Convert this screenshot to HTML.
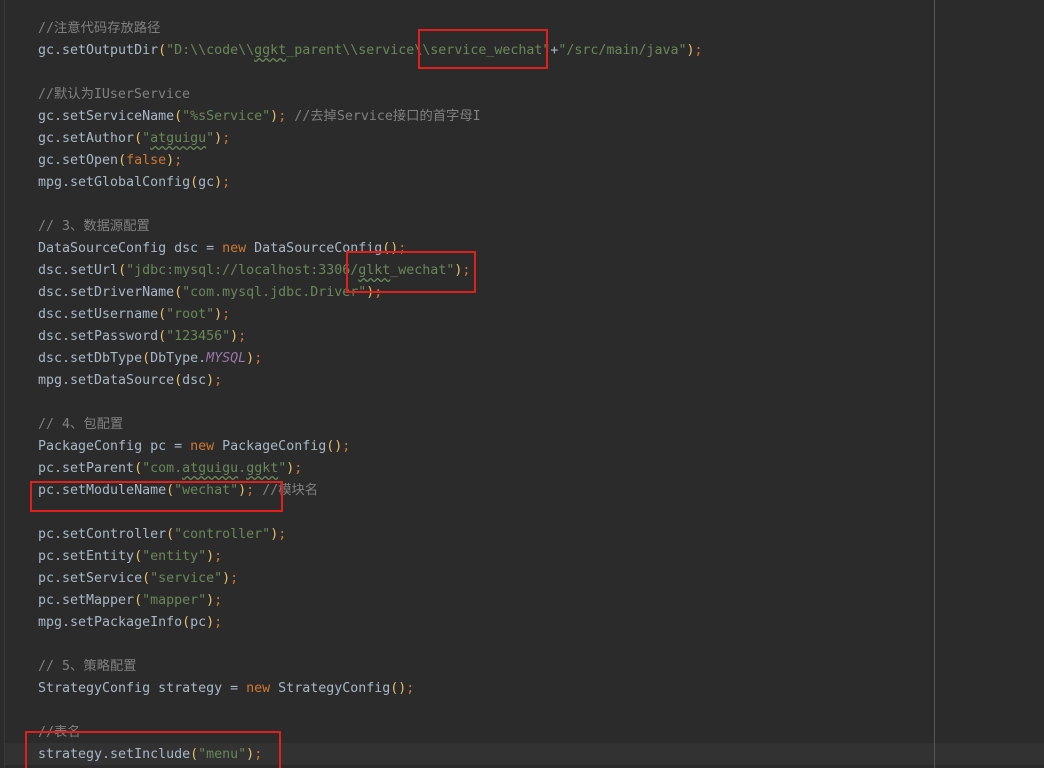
<!DOCTYPE html>
<html><head><meta charset="utf-8"><style>
html,body{margin:0;padding:0;background:#2b2b2b;width:1044px;height:768px;overflow:hidden;position:relative}
.gut{position:absolute;left:4px;top:0;width:1px;height:768px;background:#353d35}
.mg{position:absolute;left:934px;top:0;width:1px;height:768px;background:#555}
.cur{position:absolute;left:5px;top:743px;width:1039px;height:22px;background:#323232}
pre{position:absolute;left:38px;top:18px;margin:0;font-family:"DejaVu Sans Mono","Noto Sans CJK SC",monospace;font-size:13.3px;line-height:22px;color:#a9b7c6}
.c{color:#808080}.s{color:#6a8759}.k{color:#cc7832}.p{color:#e8bf6a}.m{color:#9876aa;font-style:italic}
.u{text-decoration:underline wavy #6a8759;text-underline-offset:3px}
.box{position:absolute;border:2px solid #e0201f;box-sizing:border-box}
</style></head><body>
<div class="gut"></div><div class="cur"></div><div class="mg"></div>
<pre><span class="c">//注意代码存放路径</span>
gc.setOutputDir<span class="p">(</span><span class="s">"D:\\code\\<span class="u">ggkt</span>_parent\\service\\service_wechat"</span>+<span class="s">"/src/main/java"</span><span class="p">)</span><span class="k">;</span>

<span class="c">//默认为IUserService</span>
gc.setServiceName<span class="p">(</span><span class="s">"%sService"</span><span class="p">)</span><span class="k">;</span> <span class="c">//去掉Service接口的首字母I</span>
gc.setAuthor<span class="p">(</span><span class="s">"<span class="u">atguigu</span>"</span><span class="p">)</span><span class="k">;</span>
gc.setOpen<span class="p">(</span><span class="k">false</span><span class="p">)</span><span class="k">;</span>
mpg.setGlobalConfig<span class="p">(</span>gc<span class="p">)</span><span class="k">;</span>

<span class="c">// 3、数据源配置</span>
DataSourceConfig dsc = <span class="k">new</span> DataSourceConfig<span class="p">()</span><span class="k">;</span>
dsc.setUrl<span class="p">(</span><span class="s">"jdbc:mysql://localhost:3306/<span class="u">glkt</span>_wechat"</span><span class="p">)</span><span class="k">;</span>
dsc.setDriverName<span class="p">(</span><span class="s">"com.mysql.jdbc.Driver"</span><span class="p">)</span><span class="k">;</span>
dsc.setUsername<span class="p">(</span><span class="s">"root"</span><span class="p">)</span><span class="k">;</span>
dsc.setPassword<span class="p">(</span><span class="s">"123456"</span><span class="p">)</span><span class="k">;</span>
dsc.setDbType<span class="p">(</span>DbType.<span class="m">MYSQL</span><span class="p">)</span><span class="k">;</span>
mpg.setDataSource<span class="p">(</span>dsc<span class="p">)</span><span class="k">;</span>

<span class="c">// 4、包配置</span>
PackageConfig pc = <span class="k">new</span> PackageConfig<span class="p">()</span><span class="k">;</span>
pc.setParent<span class="p">(</span><span class="s">"com.<span class="u">atguigu</span>.<span class="u">ggkt</span>"</span><span class="p">)</span><span class="k">;</span>
pc.setModuleName<span class="p">(</span><span class="s">"wechat"</span><span class="p">)</span><span class="k">;</span> <span class="c">//模块名</span>

pc.setController<span class="p">(</span><span class="s">"controller"</span><span class="p">)</span><span class="k">;</span>
pc.setEntity<span class="p">(</span><span class="s">"entity"</span><span class="p">)</span><span class="k">;</span>
pc.setService<span class="p">(</span><span class="s">"service"</span><span class="p">)</span><span class="k">;</span>
pc.setMapper<span class="p">(</span><span class="s">"mapper"</span><span class="p">)</span><span class="k">;</span>
mpg.setPackageInfo<span class="p">(</span>pc<span class="p">)</span><span class="k">;</span>

<span class="c">// 5、策略配置</span>
StrategyConfig strategy = <span class="k">new</span> StrategyConfig<span class="p">()</span><span class="k">;</span>

<span class="c">//表名</span>
strategy.setInclude<span class="p">(</span><span class="s">"menu"</span><span class="p">)</span><span class="k">;</span></pre>
<div class="box" style="left:418px;top:29px;width:130px;height:40px"></div>
<div class="box" style="left:346px;top:251px;width:130px;height:42px"></div>
<div class="box" style="left:30px;top:481px;width:253px;height:31px"></div>
<div class="box" style="left:25px;top:731px;width:256px;height:40px"></div>
</body></html>
